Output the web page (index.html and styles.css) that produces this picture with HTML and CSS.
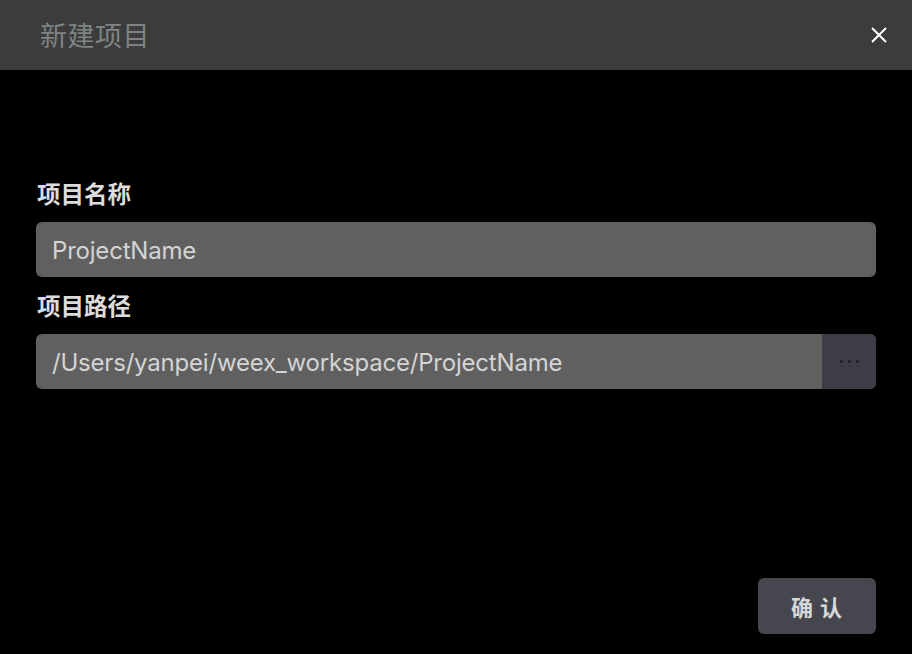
FILE: index.html
```html
<!DOCTYPE html>
<html lang="zh">
<head>
<meta charset="utf-8">
<link rel="stylesheet" href="styles.css">
</head>
<body>
<div class="dialog">
  <header class="header">
    <h1 class="title">新建项目</h1>
    <button class="close" aria-label="close">
      <svg width="18" height="18" viewBox="0 0 18 18"><path d="M2 2L16 16M16 2L2 16" stroke="#fff" stroke-width="2" fill="none"/></svg>
    </button>
  </header>
  <main class="body">
    <label class="label">项目名称</label>
    <div class="field"><span class="value">ProjectName</span></div>
    <label class="label label2">项目路径</label>
    <div class="field"><span class="value">/Users/yanpei/weex_workspace/ProjectName</span><span class="browse"><i></i><i></i><i></i></span></div>
    <div class="actions"><button class="confirm">确 认</button></div>
  </main>
</div>
</body>
</html>
```
FILE: styles.css
```css
* { box-sizing: border-box; }
html, body { margin: 0; padding: 0; background: #000; }
body { width: 912px; height: 654px; overflow: hidden; font-family: "Inter", "Noto Sans CJK SC", sans-serif; }
.dialog { width: 912px; height: 654px; display: flex; flex-direction: column; }
.header { height: 70px; background: #3c3c3c; display: flex; align-items: center; justify-content: space-between; padding: 0 24px 0 40px; flex-shrink: 0; }
.title { margin: 0; font-family: "Noto Sans CJK SC", sans-serif; font-weight: 400; font-size: 27px; color: #7e8484; letter-spacing: 0.5px; line-height: 1; padding-bottom: 2px; }
.close { background: none; border: 0; padding: 0; width: 18px; height: 18px; display: flex; }
.body { flex: 1; padding: 107px 36px 0 36px; display: flex; flex-direction: column; }
.label { font-family: "Noto Sans CJK SC", sans-serif; font-weight: 700; font-size: 23.5px; color: #dcdcdc; line-height: 32px; padding-left: 1px; }
.label2 { margin-top: 12px; }
.field { margin-top: 13px; height: 55px; background: #606060; border-radius: 6px; display: flex; align-items: center; overflow: hidden; }
.value { flex: 1; padding: 2px 0 0 16px; font-size: 24px; color: #d4d4d4; letter-spacing: -0.2px; }
.browse { width: 54px; height: 100%; background: #3d3d45; display: flex; align-items: center; justify-content: center; gap: 5px; }
.browse i { width: 3px; height: 3px; border-radius: 50%; background: #1e1e22; display: block; }
.actions { margin-top: auto; margin-bottom: 20px; display: flex; justify-content: flex-end; }
.confirm { width: 118px; height: 56px; background: #45464e; border: 0; border-radius: 6px; font-family: "Noto Sans CJK SC", sans-serif; font-weight: 700; font-size: 22px; color: #d8d8d8; letter-spacing: 1px; }
```
